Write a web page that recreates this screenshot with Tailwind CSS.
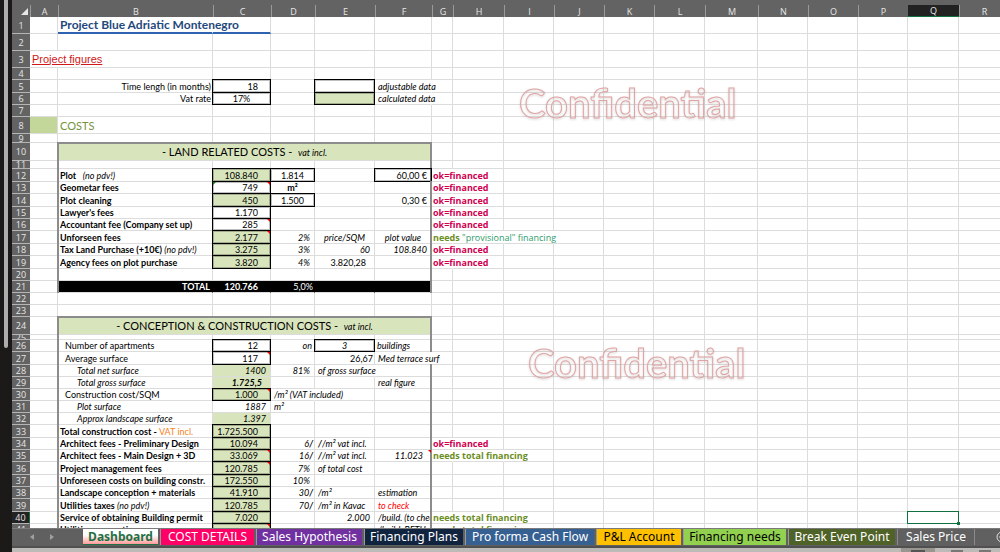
<!DOCTYPE html>
<html lang="en">
<head>
  <meta charset="UTF-8">
  <meta name="viewport" content="width=device-width, initial-scale=1.0">
  <title>Project Blue Adriatic Montenegro</title>
  <script src="https://cdn.jsdelivr.net/npm/@tailwindcss/browser@4"></script>
</head>
<body class="bg-[#1c1a19] h-screen overflow-hidden flex font-['Lato',sans-serif] text-black">
  <!-- Left edge with scroll thumb -->
  <div class="w-3 shrink-0 h-full px-1">
    <div class="h-[63%] w-1 rounded-b bg-[#adadad]"></div>
  </div>

  <div class="flex-1 min-w-0 flex flex-col">
    <!-- Sheet -->
    <main class="relative flex-1 min-h-0 overflow-hidden bg-white">
      <table class="table-fixed border-separate border-spacing-0 w-[988px] min-w-full text-[9px] leading-[11px]">
        <colgroup id="cols"></colgroup>
        <thead id="head"></thead>
        <tbody id="body"></tbody>
      </table>
      <p class="absolute left-[507px] top-[79px] text-[40px] leading-[48px] font-bold text-transparent [-webkit-text-stroke:1px_#e2a3a3] drop-shadow-[0_1px_1px_#00000033]">Confidential</p>
      <p class="absolute left-[516px] top-[339px] text-[40px] leading-[48px] font-bold text-transparent [-webkit-text-stroke:1px_#e2a3a3] drop-shadow-[0_1px_1px_#00000033]">Confidential</p>
    </main>

    <!-- Sheet tabs -->
    <nav class="h-5 shrink-0 pb-px bg-[#606060] border-t border-[#7a7a7a] border-b-2 border-b-[#505050] flex items-stretch gap-0.5 overflow-hidden font-['Noto_Sans',sans-serif] text-[12px] leading-[14px] text-white whitespace-nowrap">
      <div class="w-[69px] shrink-0 flex items-center gap-4 pl-[18px]">
        <button aria-label="Previous sheet"><svg class="w-1 h-2" viewBox="0 0 4 8"><path d="M4 1v6L0 4z" fill="#a0a0a0"/></svg></button>
        <button aria-label="Next sheet"><svg class="w-1 h-2" viewBox="0 0 4 8"><path d="M0 1v6l4-3z" fill="#a0a0a0"/></svg></button>
      </div>
      <button class="w-[75px] shrink-0 font-bold text-[#1e7145] bg-linear-to-b from-white from-40% to-[#ff9a9a] border-b border-[#1e7145]">Dashboard</button>
      <button class="w-[94px] shrink-0 border-l border-[#9a9a9a] bg-[#ff0066]">COST DETAILS</button>
      <button class="w-[106px] shrink-0 border-l border-[#9a9a9a] bg-[#7030a0]">Sales Hypothesis</button>
      <button class="w-[99px] shrink-0 border-l border-[#9a9a9a] bg-[#10233f]">Financing Plans</button>
      <button class="w-[129px] shrink-0 border-l border-[#9a9a9a] bg-[#366092]">Pro forma Cash Flow</button>
      <button class="w-[85px] shrink-0 border-l border-[#9a9a9a] bg-[#ffc000] text-black">P&amp;L Account</button>
      <button class="w-[103px] shrink-0 border-l border-[#9a9a9a] bg-[#92d050] text-black">Financing needs</button>
      <button class="w-[107px] shrink-0 border-l border-[#9a9a9a] bg-[#4f6228]">Break Even Point</button>
      <button class="w-[78px] shrink-0 border-x border-[#8a8a8a]">Sales Price</button>
      <button aria-label="New sheet" class="ml-auto w-2 shrink-0 overflow-hidden"><svg class="w-3 h-3 ml-1" viewBox="0 0 12 12" fill="none" stroke="#e0e0e0"><circle cx="6" cy="6" r="5"/><path d="M6 3v6M3 6h6"/></svg></button>
    </nav>
    <!-- Status bar -->
    <footer class="h-1 shrink-0 bg-[#bdbbb8] flex justify-end pr-[9px] gap-4">
      <div class="w-[34px] bg-[#99958f] px-[10px] pt-[2px]"><div class="h-[2px] bg-[#555]"></div></div>
      <div class="w-3 pt-[2px]"><div class="h-[2px] bg-[#777]"></div></div>
      <div class="w-3 pt-[2px]"><div class="h-[2px] bg-[#777]"></div></div>
    </footer>
  </div>

  <script>
    const cols = 'ABCDEFGHIJKLMNOPQR'.split('');
    const colWidths = [28, 155, 58, 44, 60, 57, 21, 51, 50, 50, 50, 51, 53, 50, 50, 50, 51, 50];
    const rowHeights = [
      17, 17, 17, 12, 13, 12, 12, 17, 9, 18, 8, 13, 12, 13, 12, 12, 13, 12, 13, 12, 12,
      12, 12, 18, 5, 12, 13, 12, 12, 12, 12, 12, 13, 12, 12, 13, 12, 12, 13, 12, 12
    ];

    const box = "after:absolute after:-inset-px after:border after:border-black after:shadow-[inset_0_0_0_1px_#00000040] after:content-['']";
    const green = 'bg-[#d8e4bc]';
    const calc = green + ' ' + box;
    const num = 'justify-end pr-3';
    const note = 'italic';
    const noteR = 'italic justify-end pr-1';
    const label = 'font-bold pl-0.5';
    const ok = { t: 'ok=financed', d: "pl-px font-bold text-[#d0004f] font-['Open_Sans',sans-serif]", spill: 1 };
    const needs = { t: 'needs total financing', d: "pl-px font-bold text-[#6b8e23] font-['Open_Sans',sans-serif]", spill: 2 };
    const pdv = ' <i class="font-normal">(no pdv!)</i>';

    // t: text, c: cell classes, d: content classes, spill: following gridlines hidden by the text
    const cells = {
      B1: { t: 'Project Blue Adriatic Montenegro', c: 'border-b-2 border-b-[#2f62b0]', d: 'pl-0.5 font-bold text-[12px] text-[#1f497d]', spill: 1 },
      C1: { c: 'border-b-2 border-b-[#2f62b0]' },
      A3: { t: 'Project figures', d: "pl-0.5 text-[11px] underline text-[#d01818] font-['Liberation_Sans',sans-serif]", spill: 1 },
      B5: { t: 'Time lengh (in months)', d: 'justify-end pr-px' },
      C5: { t: '18', c: box, d: num },
      E5: { c: box }, F5: { t: 'adjustable data', d: note + ' pl-[3px]', spill: 1 },
      B6: { t: 'Vat rate', d: 'justify-end pr-px' },
      C6: { t: '17%', c: box, d: 'justify-center' },
      E6: { c: calc }, F6: { t: 'calculated data', d: note + ' pl-[3px]', spill: 1 },
      A8: { c: 'bg-[#c4d79b]' },
      B8: { t: 'COSTS', d: 'pl-0.5 text-[11px] text-[#76933c]' },
      B10: { t: '- LAND RELATED COSTS - &nbsp;<i class="text-[9px]">vat incl.</i>', span: 5, c: green, d: 'justify-center text-[11px]' },
      B12: { t: 'Plot &nbsp;' + pdv, d: label }, C12: { t: '108.840', c: calc, d: num }, D12: { t: '1.814', c: box, d: 'justify-center' },
      F12: { t: '60,00 €', c: box, d: 'justify-end pr-1' }, G12: ok,
      B13: { t: 'Geometar fees', d: label }, C13: { t: '749', c: box, d: num, mark: 1, error: 1 }, D13: { t: 'm²', d: 'justify-center font-bold' }, G13: ok,
      B14: { t: 'Plot cleaning', d: label }, C14: { t: '450', c: calc, d: num }, D14: { t: '1.500', c: box, d: 'justify-center' },
      F14: { t: '0,30 €', d: 'justify-end pr-1' }, G14: ok,
      B15: { t: "Lawyer's fees", d: label }, C15: { t: '1.170', c: box, d: num }, G15: ok,
      B16: { t: 'Accountant fee (Company set up)', d: label }, C16: { t: '285', c: box, d: num, mark: 1 }, G16: ok,
      B17: { t: 'Unforseen fees', d: label }, C17: { t: '2.177', c: calc, d: num, mark: 1 }, D17: { t: '2%', d: noteR },
      E17: { t: 'price/SQM', d: note + ' justify-center' }, F17: { t: 'plot value', d: note + ' justify-center' },
      G17: { t: 'needs <span class="font-normal text-[#2e9b6b]">"provisional" financing</span>', d: needs.d, spill: 3 },
      B18: { t: 'Tax Land Purchase (+10€)' + pdv, d: label }, C18: { t: '3.275', c: calc, d: num }, D18: { t: '3%', d: noteR },
      E18: { t: '60', d: noteR }, F18: { t: '108.840', d: noteR }, G18: ok,
      B19: { t: 'Agency fees on plot purchase', d: label }, C19: { t: '3.820', c: calc, d: num }, D19: { t: '4%', d: noteR },
      E19: { t: '3.820,28', d: 'justify-end pr-2' }, G19: ok,
      B21: { t: 'TOTAL', d: 'justify-end pr-0.5 font-bold text-white' },
      C21: { t: '120.766', d: num + ' font-bold text-white' }, D21: { t: '5,0%', d: 'justify-end pr-px text-white' },
      B24: { t: '- CONCEPTION &amp; CONSTRUCTION COSTS - &nbsp;<i class="text-[9px]">vat incl.</i>', span: 5, c: green, d: 'justify-center text-[11px]' },
      B26: { t: 'Number of apartments', d: 'pl-[7px]' }, C26: { t: '12', c: box, d: num }, D26: { t: 'on', d: 'italic justify-end pr-0.5' },
      E26: { t: '3', c: box, d: 'italic justify-center' }, F26: { t: 'buildings', d: 'italic pl-0.5' },
      B27: { t: 'Average surface', d: 'pl-[7px]' }, C27: { t: '117', c: box, d: num, mark: 1 }, E27: { t: '26,67', d: 'justify-end pr-px' },
      F27: { t: 'Med terrace surf', d: note + ' pl-[3px]', spill: 1 },
      B28: { t: 'Total net surface', d: 'italic pl-[19px]' }, C28: { t: '1400', c: green, d: 'italic justify-end pr-1' }, D28: { t: '81%', d: noteR },
      E28: { t: 'of gross surface', d: note + ' pl-[3px]', spill: 1 },
      B29: { t: 'Total gross surface', d: 'italic pl-[19px]' }, C29: { t: '1.725,5', c: green, d: 'italic font-bold justify-end pr-2' }, F29: { t: 'real figure', d: note + ' pl-[3px]' },
      B30: { t: 'Construction cost/SQM', d: 'pl-[7px]' }, C30: { t: '1.000', c: calc, d: num, mark: 1 }, D30: { t: '/m² (VAT included)', d: note + ' pl-[3px]', spill: 1 },
      B31: { t: 'Plot surface', d: 'italic pl-[19px]' }, C31: { t: '1887', d: 'italic justify-end pr-1' }, D31: { t: 'm²', d: note + ' pl-[3px]' },
      B32: { t: 'Approx landscape surface', d: 'italic pl-[19px]' }, C32: { t: '1.397', c: green, d: 'italic justify-end pr-1' },
      B33: { t: 'Total construction cost - <span class="font-normal text-[#f58220]">VAT incl.</span>', d: label }, C33: { t: '1.725.500', c: calc, d: num },
      B34: { t: 'Architect fees - Preliminary Design', d: label }, C34: { t: '10.094', c: calc, d: num }, D34: { t: '6<b>/</b>', d: 'italic justify-end pr-px' },
      E34: { t: '<b>/</b>/m² vat incl.', d: note + ' pl-[3px]' }, G34: ok,
      B35: { t: 'Architect fees - Main Design + 3D', d: label }, C35: { t: '33.069', c: calc, d: num, mark: 1 }, D35: { t: '16<b>/</b>', d: 'italic justify-end pr-px' },
      E35: { t: '<b>/</b>/m² vat incl.', d: note + ' pl-[3px]' }, F35: { t: '11.023', d: 'italic justify-end pr-2', mark: 1 }, G35: needs,
      B36: { t: 'Project management fees', d: label }, C36: { t: '120.785', c: calc, d: num, mark: 1 }, D36: { t: '7%', d: noteR }, E36: { t: 'of total cost', d: note + ' pl-[3px]' },
      B37: { t: 'Unforeseen costs on building constr.', d: label }, C37: { t: '172.550', c: calc, d: num }, D37: { t: '10%', d: noteR },
      B38: { t: 'Landscape conception + materials', d: label }, C38: { t: '41.910', c: calc, d: num }, D38: { t: '30<b>/</b>', d: 'italic justify-end pr-px' },
      E38: { t: '/m²', d: note + ' pl-[3px]' }, F38: { t: 'estimation', d: note + ' pl-[3px]' },
      B39: { t: 'Utilities taxes' + pdv, d: label }, C39: { t: '120.785', c: calc, d: num }, D39: { t: '70<b>/</b>', d: 'italic justify-end pr-px' },
      E39: { t: '/m² in Kavac', d: note + ' pl-[3px]' }, F39: { t: 'to check', d: note + ' pl-[3px] text-[#ff0000]' },
      B40: { t: 'Service of obtaining Building permit', d: label }, C40: { t: '7.020', c: calc, d: num }, E40: { t: '2.000', d: noteR },
      F40: { t: '/build. (to check)', d: note + ' pl-[3px] overflow-hidden' }, G40: needs,
      Q40: { c: "after:absolute after:-inset-px after:border after:border-[#107040] after:content-[''] before:absolute before:-right-0.5 before:-bottom-0.5 before:z-10 before:size-[3px] before:bg-[#107040] before:content-['']" },
      B41: { t: 'Utilities connections', d: label }, C41: { c: calc, mark: 1 }, F41: { t: '/build. BETU', d: note + ' pl-[3px]' }, G41: needs
    };

    // Grey frames round the two cost blocks
    const inFrame = r => (r >= 10 && r <= 21) || r >= 24;
    const edgeLeft = '<span class="absolute -left-px -inset-y-px w-0.5 bg-[#8c8c8c]"></span>';
    const edgeRight = '<span class="absolute -right-px -inset-y-px w-0.5 bg-[#8c8c8c]"></span>';
    const edgeTop = '<span class="absolute -inset-x-px -top-px h-0.5 bg-[#8c8c8c]"></span>';
    const markHtml = '<span class="absolute z-10 top-0 right-0 border-t-[3px] border-t-[#ee0000] border-l-[3px] border-l-transparent"></span>';
    const errorHtml = '<span class="absolute z-10 top-0 left-0 border-t-[3px] border-t-[#107c10] border-r-[3px] border-r-transparent"></span>';

    document.getElementById('cols').innerHTML =
      '<col style="width:18px">' + colWidths.map(w => `<col style="width:${w}px">`).join('');

    document.getElementById('head').innerHTML =
      `<tr class="bg-[#636363] text-[#e6e6e6] font-['Open_Sans',sans-serif]">
        <th class="h-[17px] p-0 align-bottom"><svg class="ml-auto mr-0.5 mb-0.5 w-[7px] h-[7px]" viewBox="0 0 7 7"><path d="M7 0v7H0z" fill="#e6e6e6"/></svg></th>` +
      cols.map(c => {
        const state = c === 'Q' ? 'bg-[#222222] border-b border-[#107040]' : 'border-l border-[#9a9a9a]';
        return `<th class="h-[17px] p-0 pt-[5px] font-normal"><div class="h-3 flex items-center justify-center ${state}">${c}</div></th>`;
      }).join('') + '</tr>';

    let html = '';
    rowHeights.forEach((h, i) => {
      const r = i + 1;
      let skip = 0;
      let hidden = 0;
      const headState = r === 40 ? 'bg-[#222222] border-r border-r-[#107040]' : 'bg-[#636363]';
      html += `<tr style="height:${h}px"><th class="p-0 border-b border-b-[#b5b5b5] font-normal text-[#e6e6e6] font-['Open_Sans',sans-serif] ${headState}"><div class="flex items-center justify-center overflow-hidden" style="height:${h - 1}px">${r}</div></th>`;
      cols.forEach(c => {
        if (skip > 0) { skip--; return; }
        const cell = cells[c + r] || {};
        if (cell.spill) hidden = cell.spill;
        let grid = hidden > 0 ? 'border-r border-r-transparent' : 'border-r border-r-[#dcdcdc]';
        hidden--;
        const total = r === 21 && 'BCDEF'.includes(c);
        const bottom = (cell.c || '').includes('border-b-2') ? '' : 'border-b border-b-[#dcdcdc]';
        const inner = bottom ? h - 1 : h - 2;
        let extra = '';
        if (inFrame(r)) {
          if (c === 'B') extra += edgeLeft;
          if ((c === 'F' && r !== 27) || cell.span) extra += edgeRight;
          if (cell.span) extra += edgeTop;
        }
        if (cell.mark) extra += markHtml;
        if (cell.error) extra += errorHtml;
        if (total) grid = 'border-r border-r-black';
        html += `<td ${cell.span ? `colspan="${cell.span}"` : ''} class="relative p-0 ${grid} ${bottom} ${total ? 'bg-black' : ''} ${cell.c || ''}">${extra}`;
        if (cell.t) html += `<div class="flex items-center whitespace-nowrap ${cell.d || ''}" style="height:${inner}px"><span>${cell.t}</span></div>`;
        html += '</td>';
        if (cell.span) skip = cell.span - 1;
      });
      html += '</tr>';
    });
    document.getElementById('body').innerHTML = html;
  </script>
</body>
</html>
